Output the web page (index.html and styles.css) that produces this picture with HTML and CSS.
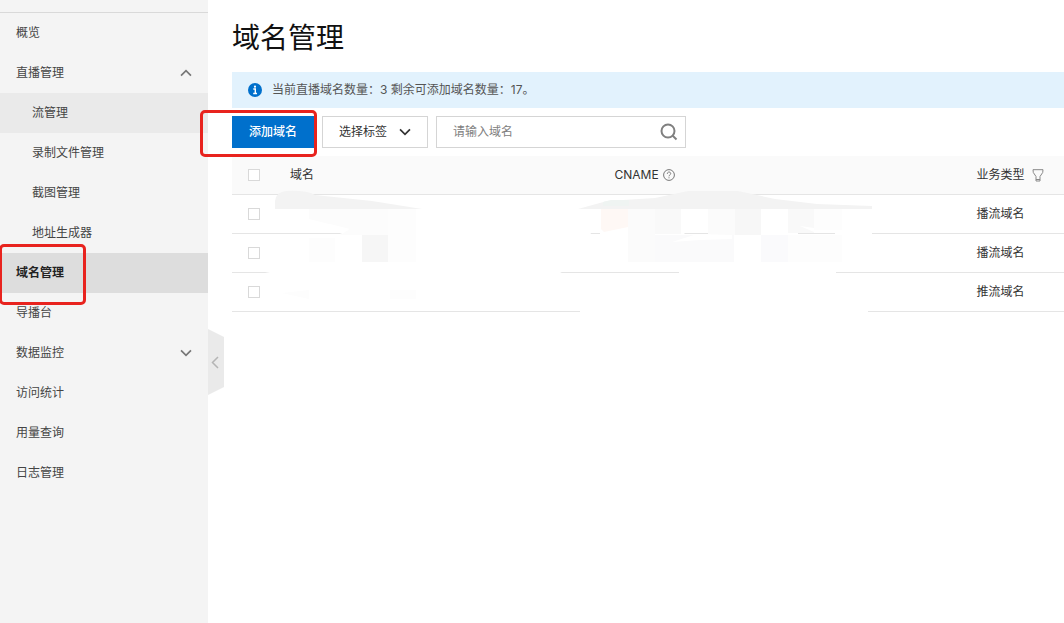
FILE: index.html
```html
<!DOCTYPE html>
<html lang="zh-CN">
<head>
<meta charset="utf-8">
<meta name="viewport" content="width=device-width, initial-scale=1">
<title>域名管理</title>
<link rel="stylesheet" href="styles.css">
</head>
<body>
<div class="app">
  <aside class="sidebar">
    <nav class="menu">
      <a class="menu-item" href="#">概览</a>
      <a class="menu-item" href="#">直播管理
        <svg class="chevron" viewBox="0 0 14 8" aria-hidden="true"><path d="M1.2 7 7 1.2 12.8 7"/></svg></a>
      <a class="menu-item sub hover" href="#">流管理</a>
      <a class="menu-item sub" href="#">录制文件管理</a>
      <a class="menu-item sub" href="#">截图管理</a>
      <a class="menu-item sub" href="#">地址生成器</a>
      <a class="menu-item active" href="#" aria-current="page">域名管理<span class="mark mark-menu"></span></a>
      <a class="menu-item" href="#">导播台</a>
      <a class="menu-item" href="#">数据监控
        <svg class="chevron" viewBox="0 0 14 8" aria-hidden="true"><path d="M1.2 1 7 6.8 12.8 1"/></svg></a>
      <a class="menu-item" href="#">访问统计</a>
      <a class="menu-item" href="#">用量查询</a>
      <a class="menu-item" href="#">日志管理</a>
    </nav>
    <button class="collapse" type="button" aria-label="收起菜单">
      <svg viewBox="0 0 16 66" aria-hidden="true"><path class="collapse-bg" d="M0 0 16 8V58L0 66Z"/><path class="collapse-arrow" d="M10 28 4.500 33.500 10 39"/></svg>
    </button>
  </aside>
  <main class="content">
    <h1 class="title">域名管理</h1>
    <div class="notice">
      <svg class="info" viewBox="0 0 14 14" aria-hidden="true"><circle cx="7" cy="7" r="7" fill="#0070cc"/><circle cx="7" cy="3.700" r="1.100" fill="#fff"/><path d="M5.300 6H7.300V10.300M5.200 10.500H9" fill="none" stroke="#fff" stroke-width="1.400"/></svg>
      <span>当前直播域名数量：3 剩余可添加域名数量：17。</span>
    </div>
    <div class="toolbar">
      <div class="add-wrap">
        <button class="add" type="button">添加域名</button>
        <span class="mark mark-add"></span>
      </div>
      <button class="filter" type="button" aria-haspopup="listbox">选择标签
        <svg viewBox="0 0 14 8" aria-hidden="true"><path d="M1.200 1 7 6.800 12.800 1"/></svg></button>
      <div class="search">
        <input type="text" placeholder="请输入域名" aria-label="请输入域名">
        <button type="button" aria-label="搜索"><svg viewBox="0 0 18 18" aria-hidden="true"><circle cx="8" cy="8" r="6.500"/><path d="M12.500 12.500 16.500 16.500"/></svg></button>
      </div>
    </div>
    <div class="table-wrap">
      <table class="domains">
        <colgroup><col class="col-check"><col class="col-domain"><col class="col-cname"><col></colgroup>
        <thead>
          <tr>
            <th><input type="checkbox" aria-label="全选"></th>
            <th>域名</th>
            <th><span class="head">CNAME <svg class="help" viewBox="0 0 12 12" aria-hidden="true"><circle cx="6" cy="6" r="5.400"/><path d="M4.300 4.800C4.300 2.500 7.700 2.500 7.700 4.600 7.700 5.900 6 5.900 6 7.300M6 8.300V9.300"/></svg></span></th>
            <th><span class="head wide">业务类型 <svg class="funnel" viewBox="0 0 12 13" aria-hidden="true"><path d="M1 .7H11L10.700 3.500 8 7.500V12H4V7.500L1.300 3.500ZM4 10.500H8"/></svg></span></th>
          </tr>
        </thead>
        <tbody>
          <tr><td><input type="checkbox" aria-label="选择第 1 行"></td><td></td><td></td><td>播流域名</td></tr>
          <tr><td><input type="checkbox" aria-label="选择第 2 行"></td><td></td><td></td><td>播流域名</td></tr>
          <tr><td><input type="checkbox" aria-label="选择第 3 行"></td><td></td><td></td><td>推流域名</td></tr>
        </tbody>
      </table>
      <svg class="redaction" viewBox="232 156 832 160" aria-hidden="true">
        <g fill="#fff">
          <path d="M337 235 350 230H588L592 235ZM265 273 280 270H556L562 273ZM679 273V269H836V273ZM580 312V308H868V312Z"/>
          <path d="M600 209H692L684 235H600ZM722 209H798V235H730ZM835 230H872V235H835Z"/>
        </g>
        <path fill="#f3f3f3" d="M275 209V201Q276 192 286 191Q306 190 315 195L372 201 422 209Z"/>
        <path fill="#f3f3f3" d="M578 209 607 201 655 198 688 191H738L775 199 817 204 872 206V209Z"/>
        <path fill="#eff4f2" d="M603 202 611 200H629V206H603Z"/>
        <path fill="#fcfcfc" d="M309 209H388V235H340L350 229 309 219Z"/>
        <path fill="#fdfdfd" d="M309 238H335V262H309ZM388 209H416V262H388ZM282 293 309 290V299ZM390 290H416V299H390Z"/>
        <path fill="#f6f6f6" d="M362 235H388V262H362Z"/>
        <path fill="#fef8f5" d="M601 209H628V227L604 232 601 229Z"/>
        <path fill="#fbfbfb" d="M628 209H655V262H628ZM708 209H735V235H708Z"/>
        <path fill="#f9f9f9" d="M655 209H681V234H655ZM788 209H814V228L800 226 814 232V233H788Z"/>
        <path fill="#f7f7f7" d="M735 209H761V235H735Z"/>
        <path fill="#fafafb" d="M655 235H734V262H655Z"/>
        <path fill="#fafafc" d="M761 235H788V262H761Z"/>
        <path fill="#fdfdfd" d="M788 235H842V262H788ZM814 209H842V230H814Z"/>
        <path fill="#fff" d="M672 242 697 234 732 235V239L700 240Z"/>
      </svg>
    </div>
  </main>
</div>
</body>
</html>
```
FILE: styles.css
```css
* { box-sizing: border-box; }
body {
  margin: 0;
  background: #fff;
  color: #333;
  font: 12px/20px Inter, "Noto Sans CJK SC", sans-serif;
}
button, input { font: inherit; color: inherit; margin: 0; padding: 0; border: 0; background: none; }
svg { flex: none; display: block; }

.app { display: flex; min-height: 100vh; }

.sidebar { position: relative; flex: none; width: 208px; padding-top: 12px; background: #f4f4f4; }
.menu { display: flex; flex-direction: column; border-top: 1px solid #d9d9d9; }
.menu-item {
  position: relative;
  display: flex;
  align-items: center;
  justify-content: space-between;
  height: 40px;
  padding: 0 16px;
  color: #444;
  text-decoration: none;
}
.sub { padding-left: 32px; }
.hover { background: #eaeaea; }
.active { background: #ddd; color: #222; font-weight: 700; }
.chevron { width: 12px; height: 8px; fill: none; stroke: #777; stroke-width: 2; }

.collapse { position: absolute; left: 100%; top: 329px; width: 16px; height: 66px; }
.collapse-bg { fill: #eaeaea; }
.collapse-arrow { fill: none; stroke: #b5b5b5; stroke-width: 1.5; }

.mark { position: absolute; z-index: 2; border: 3px solid #e8231e; border-radius: 5px; pointer-events: none; }
.mark-menu { left: -1px; top: -9px; width: 87px; height: 61px; }
.mark-add { left: -32px; top: -6px; width: 117px; height: 47px; }

.content { flex: 1; min-width: 0; padding: 18px 0 0 24px; }
.title { margin: 0 0 14px; color: #111; font-size: 28px; line-height: 40px; font-weight: 400; }
.notice { display: flex; align-items: center; gap: 10px; min-height: 36px; padding: 0 16px; background: #e2f2fd; color: #555; }
.info { width: 14px; height: 14px; }

.toolbar { display: flex; gap: 8px; padding: 8px 0; }
.add-wrap { position: relative; }
.add { display: block; width: 82px; height: 32px; background: #0070cc; color: #fff; font-weight: 500; }
.filter { display: flex; align-items: center; gap: 12px; height: 32px; padding: 0 16px; border: 1px solid #d5d5d5; }
.filter svg { width: 12px; height: 8px; fill: none; stroke: #333; stroke-width: 2; }
.search { display: flex; align-items: center; width: 250px; height: 32px; padding: 0 7px 0 16px; border: 1px solid #d5d5d5; }
.search input { flex: 1; min-width: 0; outline: 0; }
.search input::placeholder { color: #808080; opacity: 1; }
.search svg { width: 18px; height: 18px; fill: none; stroke: #808080; stroke-width: 2; }

.table-wrap { position: relative; }
.domains { width: 100%; table-layout: fixed; border-collapse: separate; border-spacing: 0; }
.col-check { width: 42px; }
.col-domain { width: 39%; }
.col-cname { width: 43.5%; }
.domains th, .domains td { height: 39px; padding: 0 16px; border-bottom: 1px solid #e5e5e5; text-align: left; font-weight: 400; }
.domains th { background: #fafafa; }
.domains input { appearance: none; display: block; width: 12px; height: 12px; border: 1px solid #d9d9d9; background: #fff; }
.head { display: flex; align-items: center; gap: 4px; }
.wide { gap: 8px; }
.help { width: 12px; height: 12px; fill: none; stroke: #777; }
.funnel { width: 12px; height: 13px; fill: none; stroke: #888; }
.redaction { position: absolute; left: 0; top: 0; width: 832px; height: 160px; pointer-events: none; }
```
